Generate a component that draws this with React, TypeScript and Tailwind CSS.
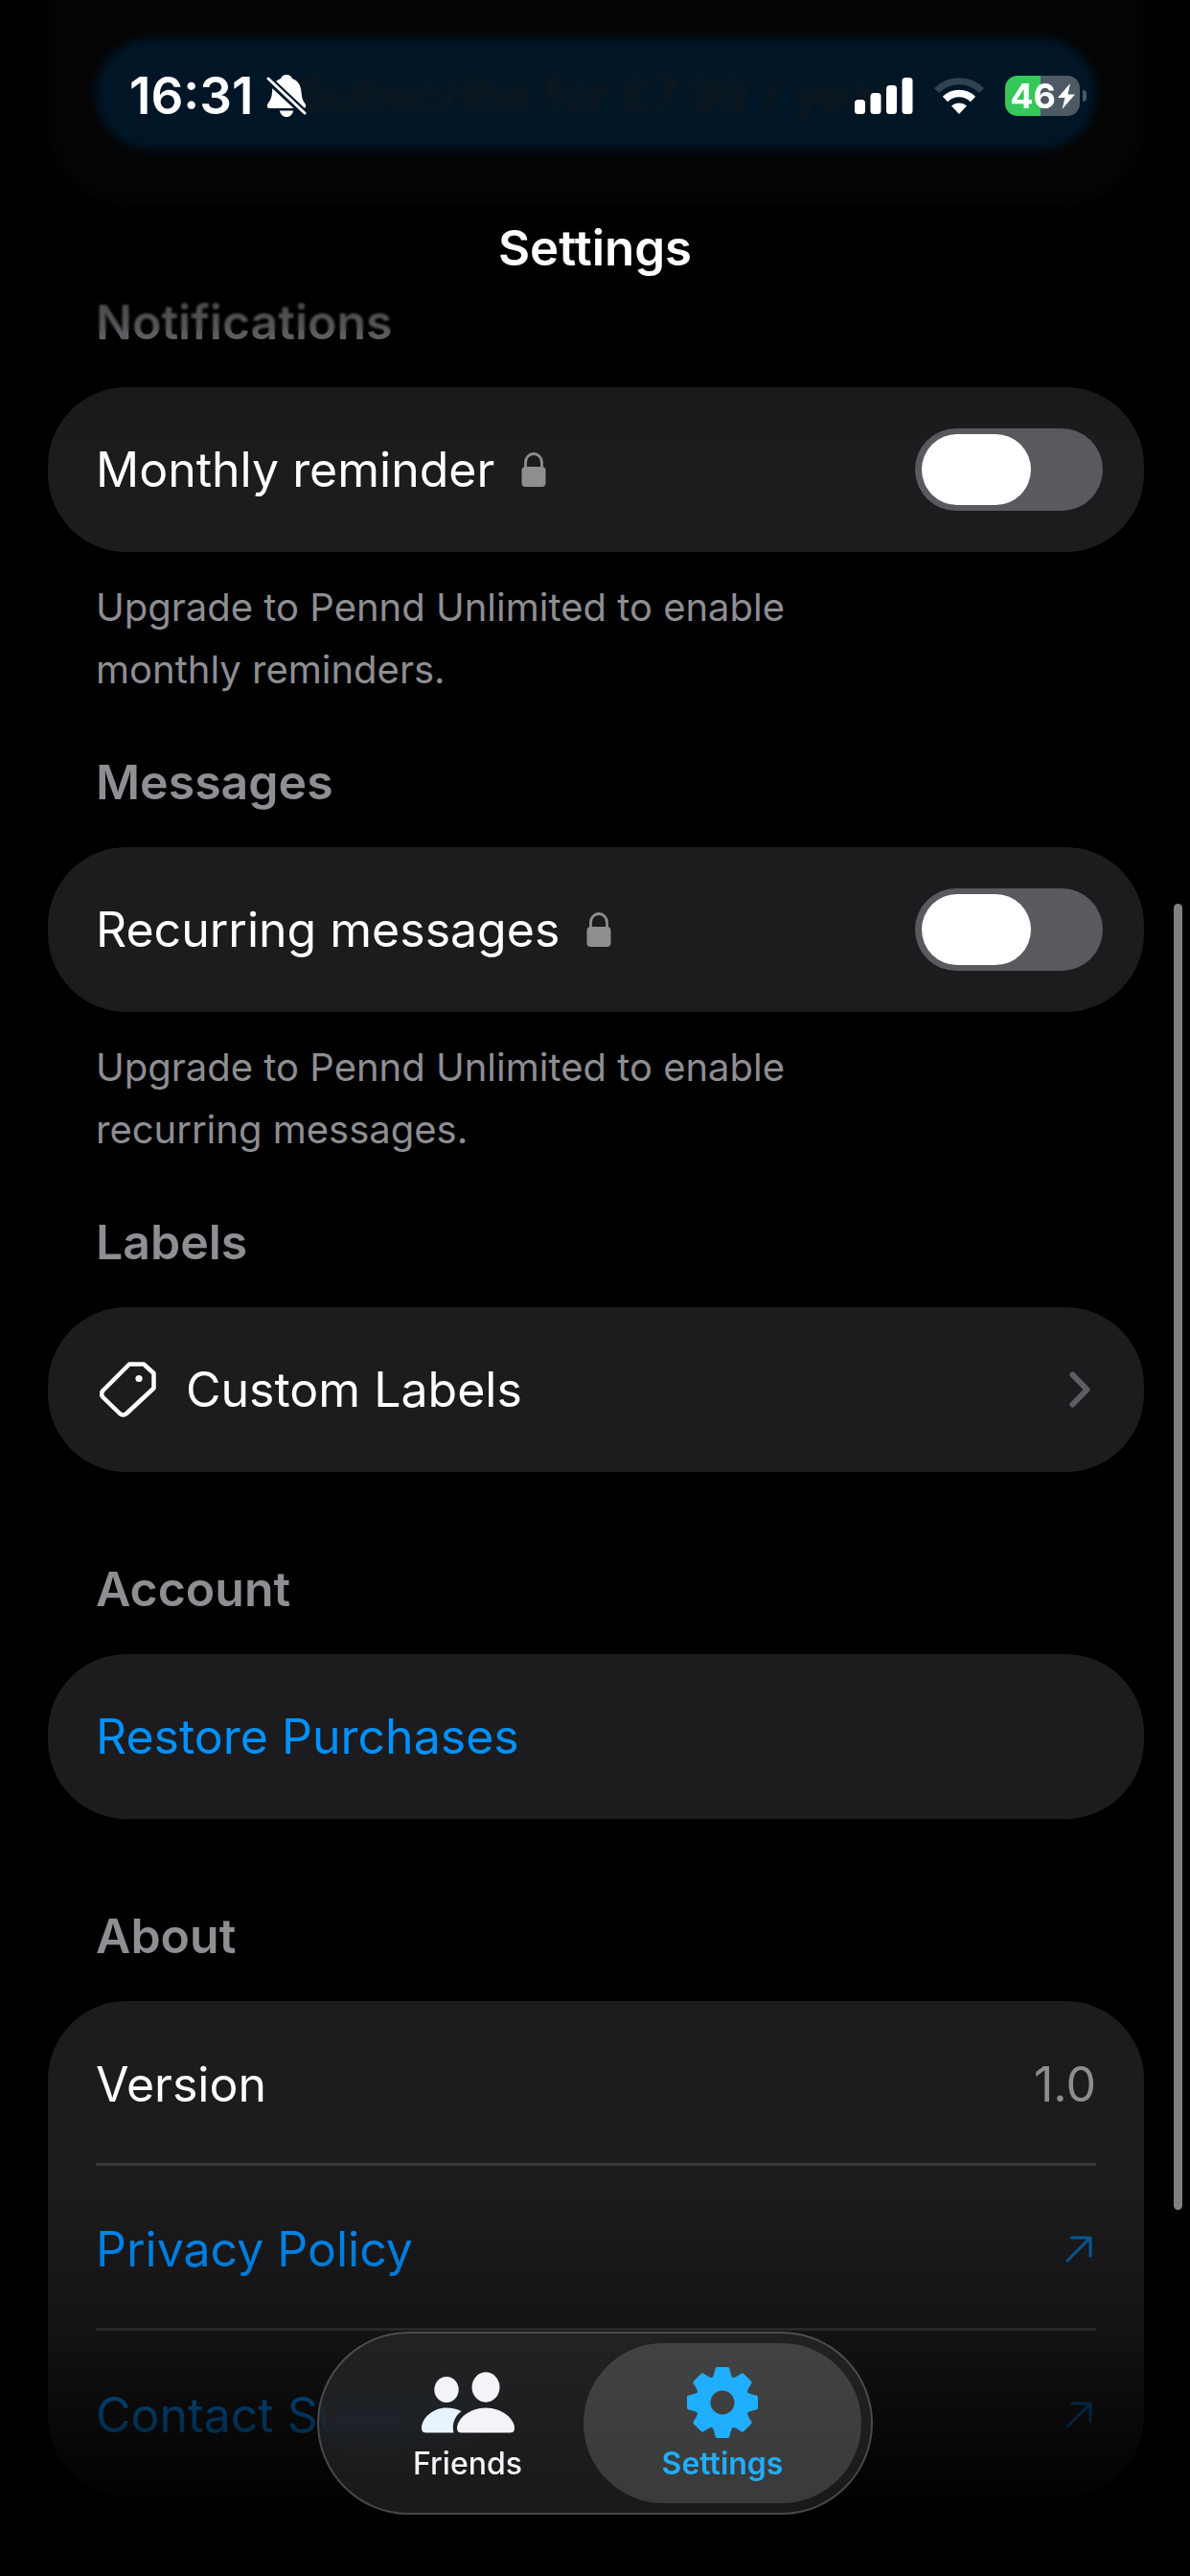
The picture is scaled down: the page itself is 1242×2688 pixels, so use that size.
import { useState } from "react";
import type { ReactNode } from "react";

const GEAR_TEETH = [0, 45, 90, 135, 180, 225, 270, 315];

function BellOffIcon() {
  return (
    <svg width="42" height="44" viewBox="0 0 42 44" fill="currentColor" aria-hidden>
      <mask id="bell-slash">
        <rect width="42" height="44" fill="white" />
        <path d="M-3 0 L45 45" stroke="black" strokeWidth="8" />
      </mask>
      <g mask="url(#bell-slash)">
        <path d="M21 0c3 0 5 1.500 6 4 6 2 9 7 9.500 14 .5 6 1.500 9 3.500 11.500 2 3 1.500 5.500-2 5.500H4c-3.500 0-4-2.500-2-5.500C4.500 26 5.500 24 6 18 6.500 11 9 6 15 4c1-2.500 3-4 6-4Z" />
        <path d="M14 37.500h14c-.5 4-3.500 6.500-7 6.500s-6.500-2.500-7-6.500Z" />
      </g>
      <path d="M2 4 L40 40" stroke="currentColor" strokeWidth="3" strokeLinecap="round" />
    </svg>
  );
}

function SignalIcon() {
  return (
    <svg width="61" height="38" viewBox="0 0 61 38" fill="currentColor" aria-hidden>
      <rect x="0" y="23" width="11" height="15" rx="3.500" />
      <rect x="16.500" y="16" width="11" height="22" rx="3.500" />
      <rect x="33" y="8" width="11" height="30" rx="3.500" />
      <rect x="49.500" y="0" width="11" height="38" rx="3.500" />
    </svg>
  );
}

function WifiIcon() {
  return (
    <svg width="52" height="38" viewBox="0 0 52 38" fill="none" aria-hidden>
      <path d="M2.500 13.500a33 33 0 0 1 47 0" stroke="#31424f" strokeWidth="7" />
      <path d="M11.500 22.500a20.500 20.500 0 0 1 29 0" stroke="white" strokeWidth="7.500" />
      <path d="M26 38l-8-8.500c4.500-4 11.500-4 16 0Z" fill="white" />
    </svg>
  );
}

function BatteryIcon() {
  return (
    <div className="flex items-center gap-[3px]">
      <div className="flex h-[42px] w-[78px] items-center justify-center gap-0.5 rounded-[13px] bg-linear-to-r from-[#34c759] from-47% to-[#4d5965] to-47%">
        <span className="text-[36px] leading-none font-bold">46</span>
        <svg width="18" height="27" viewBox="0 0 18 27" fill="white" aria-hidden>
          <path d="M13 0 L0 15h7.500L4.500 27 18 11.500h-7.500Z" />
        </svg>
      </div>
      <div className="h-3 w-1 rounded-r-full bg-[#4d5965]" />
    </div>
  );
}

function LockIcon() {
  return (
    <svg width="26" height="36" viewBox="0 0 26 36" fill="none" aria-hidden>
      <path d="M4.500 17V10.500a8.500 9 0 0 1 17 0V17" stroke="#8e8e90" strokeWidth="2.800" />
      <rect x="0.500" y="15" width="25" height="21" rx="4" fill="#8e8e90" />
    </svg>
  );
}

function TagIcon() {
  return (
    <svg width="60" height="58" viewBox="0 0 60 58" fill="none" aria-hidden>
      <path
        d="M31 2.500h15L56.500 12v15.500L28 54q-3.500 3-7 0L3.500 37q-3-3.500 0-7Z"
        stroke="white"
        strokeWidth="4.500"
        strokeLinejoin="round"
      />
      <circle cx="41" cy="17.500" r="3.600" fill="white" />
    </svg>
  );
}

function ChevronIcon() {
  return (
    <svg width="22" height="38" viewBox="0 0 22 38" fill="none" aria-hidden>
      <path
        d="M3.500 3.500L18.500 19L3.500 34.500"
        stroke="#5e5e62"
        strokeWidth="6"
        strokeLinecap="round"
        strokeLinejoin="round"
      />
    </svg>
  );
}

function ExternalArrowIcon() {
  return (
    <svg width="28" height="28" viewBox="0 0 28 28" fill="none" className="mr-1 opacity-60" aria-hidden>
      <path
        d="M2 26L26 2M6.500 2H26V21"
        stroke="#0091ff"
        strokeWidth="3"
        strokeLinecap="round"
        strokeLinejoin="round"
      />
    </svg>
  );
}

function FriendsIcon() {
  return (
    <svg width="97" height="64" viewBox="0 0 97 64" fill="#f3f4f7" aria-hidden>
      <ellipse cx="26" cy="18.500" rx="12.700" ry="13.500" />
      <ellipse cx="67" cy="16" rx="14.500" ry="15.700" />
      <path
        d="M5 63.500q-5 0-5-4.500C0 48 12 37.500 26 37.500c6 0 11 1.500 15.500 3.500C34 47 31.500 55 33.500 63.500Z"
        fill="#e8f4fd"
      />
      <path d="M42 63.500q-5 0-5-4.500C37 49 50 37.500 67 37.500S97 49 97 59q0 4.500-5 4.500Z" />
    </svg>
  );
}

function GearIcon() {
  return (
    <svg width="76" height="76" viewBox="-38 -38 76 76" fill="#20aeff" stroke="#20aeff" aria-hidden>
      <circle r="20" fill="none" strokeWidth="15" />
      {GEAR_TEETH.map((angle) => (
        <path
          key={angle}
          d="M-9-25Q-7-27-5.500-35H5.500Q7-27 9-25Z"
          strokeWidth="4"
          strokeLinejoin="round"
          transform={`rotate(${angle})`}
        />
      ))}
    </svg>
  );
}

function StatusBar() {
  return (
    <div className="flex items-center justify-between pt-[70px] pr-[108px] pl-[135px]">
      <div className="flex items-center gap-[14px]">
        <span className="text-[53px] leading-[60px] font-semibold">16:31</span>
        <BellOffIcon />
      </div>
      <div className="flex items-center gap-[22px]">
        <SignalIcon />
        <WifiIcon />
        <BatteryIcon />
      </div>
    </div>
  );
}

function Section({
  title,
  footer,
  children,
}: {
  title: string;
  footer?: string;
  children: ReactNode;
}) {
  return (
    <section className={footer ? "mb-[55px]" : "mb-[92px] last:mb-0"}>
      <h2 className="mb-[38px] px-[50px] font-semibold text-[#8e8e93]">{title}</h2>
      <div className="rounded-[82px] bg-[#1c1c1e]">{children}</div>
      {footer && (
        <p className="max-w-[860px] px-[50px] pt-[25px] text-[40px] leading-[65px] text-[#8e8e93]">
          {footer}
        </p>
      )}
    </section>
  );
}

function ToggleRow({ id, label }: { id: string; label: string }) {
  const [enabled, setEnabled] = useState(false);

  return (
    <div className="flex h-[172px] items-center justify-between pr-[43px] pl-[50px]">
      <label htmlFor={id} className="flex items-center gap-7">
        {label}
        <LockIcon />
      </label>
      <input
        id={id}
        type="checkbox"
        role="switch"
        checked={enabled}
        onChange={(e) => setEnabled(e.target.checked)}
        className="flex h-[86px] w-[196px] appearance-none items-center rounded-full bg-[#5a595e] px-[7px] before:h-[74px] before:w-[114px] before:rounded-full before:bg-white checked:justify-end checked:bg-[#34c759]"
      />
    </div>
  );
}

function LinkRow({ label, last }: { label: string; last?: boolean }) {
  return (
    <li className="mx-[50px]">
      <a
        href="#"
        className={`flex h-[172px] items-center justify-between pt-1 text-[#0091ff] ${
          last ? "" : "border-b-[3px] border-[#3a3a3d]"
        }`}
      >
        {label}
        <ExternalArrowIcon />
      </a>
    </li>
  );
}

function TabBar() {
  return (
    <nav className="fixed bottom-16 left-1/2 flex -translate-x-1/2 rounded-full border-2 border-white/20 bg-linear-to-b from-[#303032]/55 to-[#333333]/50 p-[10px] backdrop-blur-[16px]">
      <button
        type="button"
        className="flex h-[167px] w-[290px] flex-col items-center gap-2 rounded-full pt-6 text-[32px] leading-9 font-medium text-[#f3f4f7]"
      >
        <span className="flex h-[76px] items-center">
          <FriendsIcon />
        </span>
        Friends
      </button>
      <button
        type="button"
        aria-current="page"
        className="-ml-6 flex h-[167px] w-[290px] flex-col items-center gap-2 rounded-full bg-linear-to-b from-[#424244] to-[#3a3a3a] pt-6 text-[32px] leading-9 font-semibold text-[#20aeff]"
      >
        <GearIcon />
        Settings
      </button>
    </nav>
  );
}

export default function App() {
  return (
    <div className="min-h-screen bg-black font-[Inter,sans-serif] text-[50px] leading-[60px] text-white">
      <main className="pr-12 pl-[50px]">
        <div className="mb-[92px] rounded-b-[82px] bg-[#1c1c1e] px-[50px] pt-10 pb-[58px]">
          <button
            type="button"
            className="h-[116px] w-full rounded-full bg-[#0091ff] font-semibold text-[#7c9db4]"
          >
            Subscribe for £7.99 / year
          </button>
        </div>

        <Section title="Notifications" footer="Upgrade to Pennd Unlimited to enable monthly reminders.">
          <ToggleRow id="monthly-reminder" label="Monthly reminder" />
        </Section>

        <Section title="Messages" footer="Upgrade to Pennd Unlimited to enable recurring messages.">
          <ToggleRow id="recurring-messages" label="Recurring messages" />
        </Section>

        <Section title="Labels">
          <button type="button" className="flex h-[172px] w-full items-center pr-14 pl-[54px]">
            <TagIcon />
            <span className="ml-[30px] flex-1 text-left">Custom Labels</span>
            <ChevronIcon />
          </button>
        </Section>

        <Section title="Account">
          <button type="button" className="h-[172px] w-full px-[50px] text-left text-[#0091ff]">
            Restore Purchases
          </button>
        </Section>

        <Section title="About">
          <ul>
            <li className="mx-[50px] flex h-[172px] items-center justify-between border-b-[3px] border-[#3a3a3d] pt-1">
              <span>Version</span>
              <span className="text-[#8e8e90]">1.0</span>
            </li>
            <LinkRow label="Privacy Policy" />
            <LinkRow label="Contact Support" last />
          </ul>
        </Section>
      </main>

      {/* content dims and softens as it scrolls under the bars */}
      <div className="pointer-events-none fixed inset-x-0 top-0 h-[345px] backdrop-blur-[1px]" />
      <div className="pointer-events-none fixed inset-x-0 top-0 h-[240px] backdrop-blur-[5px]" />
      <div className="pointer-events-none fixed inset-x-0 top-0 h-[460px] bg-linear-[to_bottom,rgba(0,0,0,0.85)_48%,rgba(0,0,0,0.33)_77%,rgba(0,0,0,0.06)_88%,transparent]" />
      <div className="pointer-events-none fixed inset-x-0 bottom-0 h-[398px] bg-linear-[to_bottom,transparent,rgba(0,0,0,0.3)_35%,rgba(0,0,0,0.58)_53%,rgba(0,0,0,0.86)_74%,rgba(0,0,0,0.9)]" />

      <header className="fixed inset-x-0 top-0">
        <StatusBar />
        <h1 className="mt-[99px] text-center text-[51px] font-semibold">Settings</h1>
      </header>

      <div className="fixed top-[943px] right-2 h-[1363px] w-[9px] rounded-full bg-[#808080]" />

      <TabBar />
    </div>
  );
}
